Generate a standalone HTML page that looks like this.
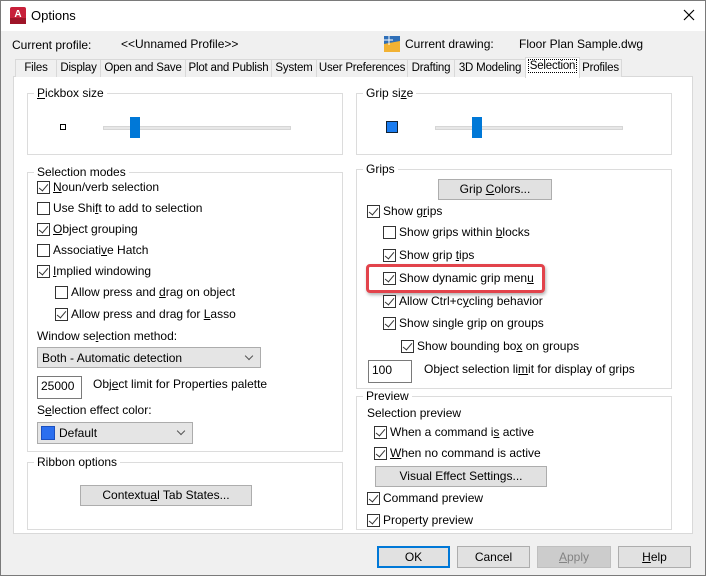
<!DOCTYPE html>
<html><head><meta charset="utf-8"><style>
*{box-sizing:border-box;margin:0;padding:0}
body{width:706px;height:576px;background:#f0f0f0;font-family:"Liberation Sans",sans-serif;font-size:12px;color:#000;position:relative;overflow:hidden}
.a{position:absolute;white-space:nowrap;line-height:14px}
.win{position:absolute;left:0;top:0;width:706px;height:576px;border:1px solid #7a7a7a}
.title{position:absolute;left:1px;top:1px;width:704px;height:30px;background:#fff}
.tab{position:absolute;top:59px;height:18px;border:1px solid #d9d9d9;border-bottom:none;background:#f0f0f0;text-align:center;line-height:16px;white-space:nowrap;font-size:11.5px;letter-spacing:-0.2px;overflow:visible}
.panel{position:absolute;left:13px;top:76px;width:680px;height:458px;background:#fff;border:1px solid #d9d9d9}
.fs{position:absolute;border:1px solid #dcdcdc}
.lg{position:absolute;background:#fff;padding:0 3px;line-height:14px;top:-8px;left:6px;white-space:nowrap}
.cb{position:absolute;width:13px;height:13px;border:1px solid #333;background:#fff}
.cb.c::after{content:"";position:absolute;left:3px;top:0px;width:4px;height:8px;border:solid #333;border-width:0 1.5px 1.5px 0;transform:rotate(40deg)}
.btn{position:absolute;background:#e1e1e1;border:1px solid #adadad;text-align:center;white-space:nowrap}
.dd{position:absolute;background:#e5e5e5;border:1px solid #acacac}
.dd::after{content:"";position:absolute;right:8px;top:5px;width:5px;height:5px;border:solid #555;border-width:0 1px 1px 0;transform:rotate(45deg)}
.tb{position:absolute;background:#fff;border:1px solid #7a7a7a;padding-left:3px;line-height:19px}
u{text-decoration:underline}
</style></head><body>
<div class="title"></div>
<div class="win"></div>
<svg class="a" style="left:10px;top:7px" width="16" height="17" viewBox="0 0 16 17"><rect x="0" y="0" width="16" height="17" rx="2" fill="#c8203a"/><rect x="0" y="11" width="16" height="6" fill="#9e1428"/><text x="8" y="10" font-family="Liberation Sans" font-weight="bold" font-size="10" fill="#fff" text-anchor="middle">A</text></svg>
<div class="a" style="left:31px;top:9px;font-size:13px">Options</div>
<svg class="a" style="left:683px;top:9px" width="12" height="12"><path d="M1 1L11 11M11 1L1 11" stroke="#000" stroke-width="1.2"/></svg>
<div class="a" style="left:12px;top:38px">Current profile:</div>
<div class="a" style="left:121px;top:37px">&lt;&lt;Unnamed Profile&gt;&gt;</div>
<svg class="a" style="left:384px;top:36px" width="16" height="16"><rect x="0" y="0" width="16" height="8" fill="#2f6fb8"/><path d="M0 8L16 5V16H0Z" fill="#f2b233"/><path d="M5 0V9M0 4H9" stroke="#fff" stroke-width="1"/></svg>
<div class="a" style="left:405px;top:37px">Current drawing:</div>
<div class="a" style="left:519px;top:37px">Floor Plan Sample.dwg</div>
<div class="panel"></div>
<div class="tab" style="left:15px;width:42px">Files</div>
<div class="tab" style="left:56px;width:45px">Display</div>
<div class="tab" style="left:100px;width:86px">Open and Save</div>
<div class="tab" style="left:185px;width:87px">Plot and Publish</div>
<div class="tab" style="left:271px;width:46px">System</div>
<div class="tab" style="left:316px;width:92px">User Preferences</div>
<div class="tab" style="left:407px;width:48px">Drafting</div>
<div class="tab" style="left:454px;width:72px">3D Modeling</div>
<div class="tab" style="left:525px;width:55px;top:57px;height:21px;background:#fff;line-height:16px"><span style="border:1px dotted #000;padding:0 1px">Selection</span></div>
<div class="tab" style="left:579px;width:43px">Profiles</div>

<div class="fs" style="left:27px;top:93px;width:316px;height:62px"><div class="lg"><u>P</u>ickbox size</div></div>
<div class="a" style="left:60px;top:124px;width:6px;height:6px;border:1px solid #000"></div>
<div class="a" style="left:103px;top:126px;width:188px;height:4px;background:#e7e7e7;border:1px solid #d6d6d6"></div>
<div class="a" style="left:130px;top:117px;width:10px;height:21px;background:#0078d7"></div>

<div class="fs" style="left:356px;top:93px;width:316px;height:62px"><div class="lg">Grip si<u>z</u>e</div></div>
<div class="a" style="left:386px;top:121px;width:12px;height:12px;background:#1a7cf0;border:1px solid #123"></div>
<div class="a" style="left:435px;top:126px;width:188px;height:4px;background:#e7e7e7;border:1px solid #d6d6d6"></div>
<div class="a" style="left:472px;top:117px;width:10px;height:21px;background:#0078d7"></div>

<div class="fs" style="left:27px;top:172px;width:316px;height:280px"><div class="lg">Selection modes</div></div>
<div class="cb c" style="left:37px;top:181px"></div><div class="a" style="left:53px;top:180px"><u>N</u>oun/verb selection</div>
<div class="cb" style="left:37px;top:202px"></div><div class="a" style="left:53px;top:201px">Use Shi<u>f</u>t to add to selection</div>
<div class="cb c" style="left:37px;top:223px"></div><div class="a" style="left:53px;top:222px"><u>O</u>bject grouping</div>
<div class="cb" style="left:37px;top:244px"></div><div class="a" style="left:53px;top:243px">Associati<u>v</u>e Hatch</div>
<div class="cb c" style="left:37px;top:265px"></div><div class="a" style="left:53px;top:264px"><u>I</u>mplied windowing</div>
<div class="cb" style="left:55px;top:286px"></div><div class="a" style="left:71px;top:285px">Allow press and <u>d</u>rag on object</div>
<div class="cb c" style="left:55px;top:308px"></div><div class="a" style="left:71px;top:307px">Allow press and drag for <u>L</u>asso</div>
<div class="a" style="left:37px;top:329px">Window se<u>l</u>ection method:</div>
<div class="dd" style="left:37px;top:347px;width:224px;height:21px"><span class="a" style="left:4px;top:3px">Both - Automatic detection</span></div>
<div class="tb" style="left:37px;top:376px;width:45px;height:23px">25000</div>
<div class="a" style="left:93px;top:377px">Obj<u>e</u>ct limit for Properties palette</div>
<div class="a" style="left:37px;top:403px">S<u>e</u>lection effect color:</div>
<div class="dd" style="left:37px;top:422px;width:156px;height:22px"><span class="a" style="left:3px;top:3px;width:14px;height:14px;background:#2b6fef;border:1px solid #1a4fc0"></span><span class="a" style="left:21px;top:3px">Default</span></div>

<div class="fs" style="left:27px;top:462px;width:316px;height:68px"><div class="lg">Ribbon options</div></div>
<div class="btn" style="left:80px;top:485px;width:172px;height:21px;line-height:19px">Contextu<u>a</u>l Tab States...</div>

<div class="fs" style="left:356px;top:169px;width:316px;height:220px"><div class="lg">Grips</div></div>
<div class="btn" style="left:438px;top:179px;width:114px;height:21px;line-height:19px">Grip <u>C</u>olors...</div>
<div class="cb c" style="left:367px;top:205px"></div><div class="a" style="left:383px;top:204px">Show g<u>r</u>ips</div>
<div class="cb" style="left:383px;top:226px"></div><div class="a" style="left:399px;top:225px">Show grips within <u>b</u>locks</div>
<div class="cb c" style="left:383px;top:249px"></div><div class="a" style="left:399px;top:248px">Show grip <u>t</u>ips</div>
<div class="cb c" style="left:383px;top:272px"></div><div class="a" style="left:399px;top:271px">Show dynamic grip men<u>u</u></div>
<div class="a" style="left:366px;top:264px;width:179px;height:29px;border:3px solid #e2434b;border-radius:4px;box-shadow:1px 2px 3px rgba(0,0,0,.3)"></div>
<div class="cb c" style="left:383px;top:295px"></div><div class="a" style="left:399px;top:294px">Allow Ctrl+c<u>y</u>cling behavior</div>
<div class="cb c" style="left:383px;top:317px"></div><div class="a" style="left:399px;top:316px">Show single grip on groups</div>
<div class="cb c" style="left:401px;top:340px"></div><div class="a" style="left:417px;top:339px">Show bounding bo<u>x</u> on groups</div>
<div class="tb" style="left:368px;top:360px;width:44px;height:23px">100</div>
<div class="a" style="left:424px;top:362px">Object selection li<u>m</u>it for display of grips</div>

<div class="fs" style="left:356px;top:396px;width:316px;height:134px"><div class="lg" style="left:6px">Preview</div></div>
<div class="a" style="left:367px;top:406px">Selection preview</div>
<div class="cb c" style="left:374px;top:426px"></div><div class="a" style="left:390px;top:425px">When a command i<u>s</u> active</div>
<div class="cb c" style="left:374px;top:447px"></div><div class="a" style="left:390px;top:446px"><u>W</u>hen no command is active</div>
<div class="btn" style="left:375px;top:466px;width:172px;height:21px;line-height:19px">Visual Effect Settin<u>g</u>s...</div>
<div class="cb c" style="left:367px;top:492px"></div><div class="a" style="left:383px;top:491px">Command preview</div>
<div class="cb c" style="left:367px;top:514px"></div><div class="a" style="left:383px;top:513px">Property preview</div>

<div class="btn" style="left:377px;top:546px;width:73px;height:22px;line-height:18px;border:2px solid #0078d7">OK</div>
<div class="btn" style="left:457px;top:546px;width:73px;height:22px;line-height:20px">Cancel</div>
<div class="btn" style="left:537px;top:546px;width:74px;height:22px;line-height:20px;background:#ccc;border-color:#bfbfbf;color:#838383"><u>A</u>pply</div>
<div class="btn" style="left:618px;top:546px;width:73px;height:22px;line-height:20px"><u>H</u>elp</div>
</body></html>
